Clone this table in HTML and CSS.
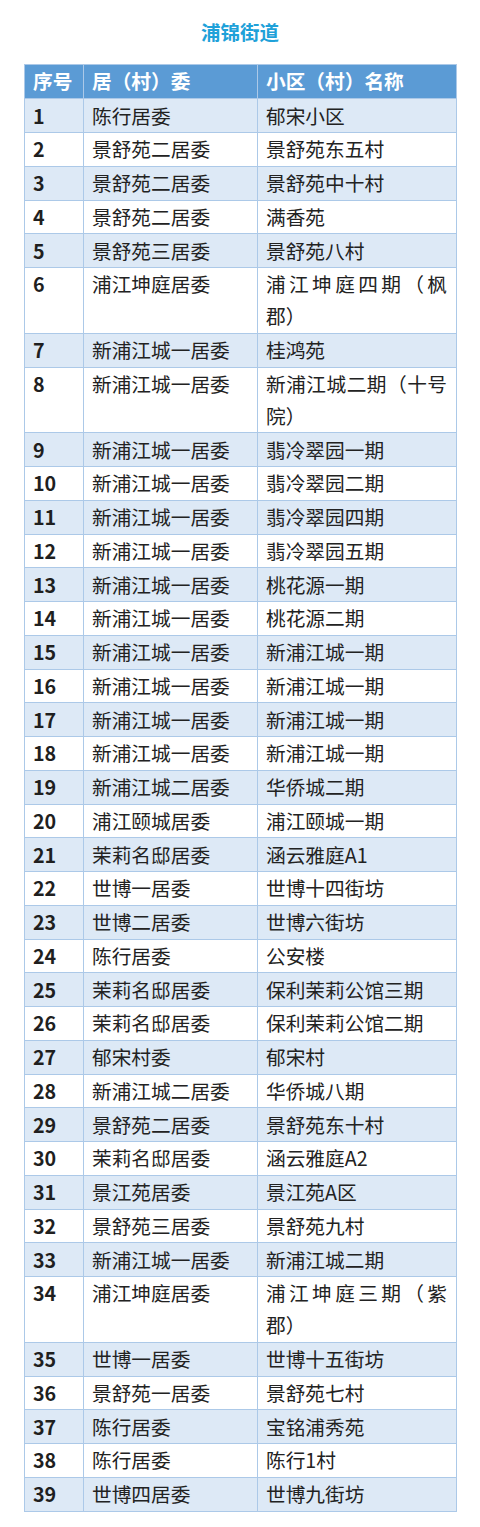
FILE: index.html
```html
<!DOCTYPE html>
<html lang="zh-CN">
<head>
<meta charset="utf-8">
<title>浦锦街道</title>
<link rel="stylesheet" href="styles.css">
</head>
<body>
<h1 class="title">浦锦街道</h1>
<table class="list">
<colgroup><col class="c1"><col class="c2"><col class="c3"></colgroup>
<thead>
<tr><th>序号</th><th>居（村）委</th><th>小区（村）名称</th></tr>
</thead>
<tbody>
<tr><td class="no">1</td><td>陈行居委</td><td>郁宋小区</td></tr>
<tr><td class="no">2</td><td>景舒苑二居委</td><td>景舒苑东五村</td></tr>
<tr><td class="no">3</td><td>景舒苑二居委</td><td>景舒苑中十村</td></tr>
<tr><td class="no">4</td><td>景舒苑二居委</td><td>满香苑</td></tr>
<tr><td class="no">5</td><td>景舒苑三居委</td><td>景舒苑八村</td></tr>
<tr><td class="no">6</td><td>浦江坤庭居委</td><td>浦江坤庭四期（枫郡）</td></tr>
<tr><td class="no">7</td><td>新浦江城一居委</td><td>桂鸿苑</td></tr>
<tr><td class="no">8</td><td>新浦江城一居委</td><td>新浦江城二期（十号院）</td></tr>
<tr><td class="no">9</td><td>新浦江城一居委</td><td>翡冷翠园一期</td></tr>
<tr><td class="no">10</td><td>新浦江城一居委</td><td>翡冷翠园二期</td></tr>
<tr><td class="no">11</td><td>新浦江城一居委</td><td>翡冷翠园四期</td></tr>
<tr><td class="no">12</td><td>新浦江城一居委</td><td>翡冷翠园五期</td></tr>
<tr><td class="no">13</td><td>新浦江城一居委</td><td>桃花源一期</td></tr>
<tr><td class="no">14</td><td>新浦江城一居委</td><td>桃花源二期</td></tr>
<tr><td class="no">15</td><td>新浦江城一居委</td><td>新浦江城一期</td></tr>
<tr><td class="no">16</td><td>新浦江城一居委</td><td>新浦江城一期</td></tr>
<tr><td class="no">17</td><td>新浦江城一居委</td><td>新浦江城一期</td></tr>
<tr><td class="no">18</td><td>新浦江城一居委</td><td>新浦江城一期</td></tr>
<tr><td class="no">19</td><td>新浦江城二居委</td><td>华侨城二期</td></tr>
<tr><td class="no">20</td><td>浦江颐城居委</td><td>浦江颐城一期</td></tr>
<tr><td class="no">21</td><td>茉莉名邸居委</td><td>涵云雅庭A1</td></tr>
<tr><td class="no">22</td><td>世博一居委</td><td>世博十四街坊</td></tr>
<tr><td class="no">23</td><td>世博二居委</td><td>世博六街坊</td></tr>
<tr><td class="no">24</td><td>陈行居委</td><td>公安楼</td></tr>
<tr><td class="no">25</td><td>茉莉名邸居委</td><td>保利茉莉公馆三期</td></tr>
<tr><td class="no">26</td><td>茉莉名邸居委</td><td>保利茉莉公馆二期</td></tr>
<tr><td class="no">27</td><td>郁宋村委</td><td>郁宋村</td></tr>
<tr><td class="no">28</td><td>新浦江城二居委</td><td>华侨城八期</td></tr>
<tr><td class="no">29</td><td>景舒苑二居委</td><td>景舒苑东十村</td></tr>
<tr><td class="no">30</td><td>茉莉名邸居委</td><td>涵云雅庭A2</td></tr>
<tr><td class="no">31</td><td>景江苑居委</td><td>景江苑A区</td></tr>
<tr><td class="no">32</td><td>景舒苑三居委</td><td>景舒苑九村</td></tr>
<tr><td class="no">33</td><td>新浦江城一居委</td><td>新浦江城二期</td></tr>
<tr><td class="no">34</td><td>浦江坤庭居委</td><td>浦江坤庭三期（紫郡）</td></tr>
<tr><td class="no">35</td><td>世博一居委</td><td>世博十五街坊</td></tr>
<tr><td class="no">36</td><td>景舒苑一居委</td><td>景舒苑七村</td></tr>
<tr><td class="no">37</td><td>陈行居委</td><td>宝铭浦秀苑</td></tr>
<tr><td class="no">38</td><td>陈行居委</td><td>陈行1村</td></tr>
<tr><td class="no">39</td><td>世博四居委</td><td>世博九街坊</td></tr>
</tbody>
</table>
</body>
</html>
```

FILE: styles.css
```css
html, body {
  margin: 0;
  padding: 0;
  background: #ffffff;
}
body {
  font-family: "Noto Sans CJK SC", "Noto Sans", "Liberation Sans", sans-serif;
  color: #222222;
}
.title {
  margin: 0;
  height: 64px;
  line-height: 64px;
  text-align: center;
  font-size: 19.5px;
  font-weight: 700;
  color: #1ea1d9;
}
.list {
  margin: 0 24px;
  width: 432px;
  border-collapse: collapse;
  table-layout: fixed;
  font-size: 19.7px;
}
.c1 { width: 59px; }
.c2 { width: 174px; }
.c3 { width: 199px; }
.list th,
.list td {
  border: 1px solid #acc9e8;
  padding: 0.375px 9px 0.375px 8px;
  line-height: 32px;
  vertical-align: top;
  text-align: justify;
}
.list th {
  background: #5b9bd5;
  color: #ffffff;
  font-weight: 700;
  text-align: left;
  line-height: 32.5px;
}
.list tbody tr:nth-child(odd) td {
  background: #dde9f6;
}
.list tbody tr:nth-child(even) td {
  background: #ffffff;
}
.list td.no {
  font-weight: 700;
  color: #1f1f1f;
  text-align: left;
}
```
